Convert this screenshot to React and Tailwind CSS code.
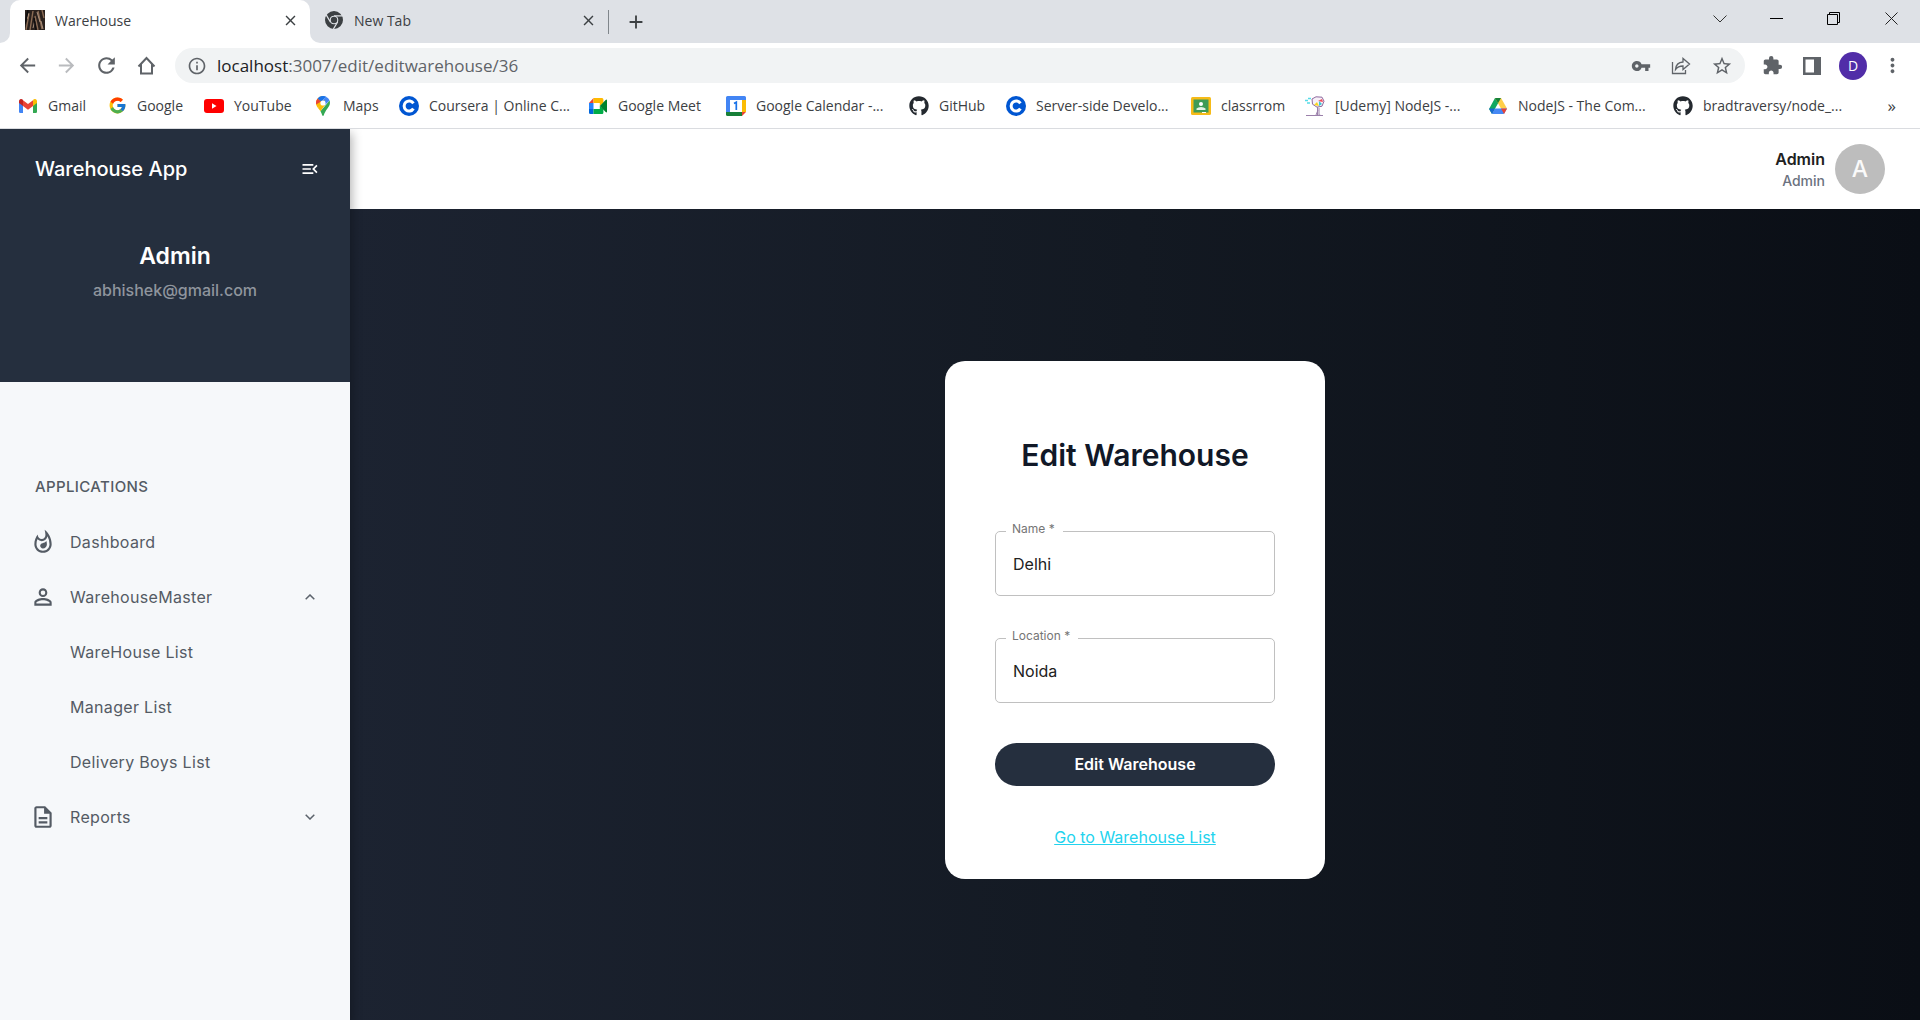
import { FcGoogle } from "react-icons/fc";
import { FaGithub } from "react-icons/fa";
import {
  MdArrowBack, MdArrowForward, MdRefresh, MdInfoOutline, MdVpnKey, MdStarBorder,
  MdExtension, MdMoreVert, MdMenuOpen, MdOutlineWhatshot, MdPersonOutline, MdOutlineDescription, MdClose, MdAdd,
} from "react-icons/md";

const GmailIcon = () => (
  <svg viewBox="0 0 18 14" className="w-[18px] h-[14px]">
    <path d="M0 2v10.700Q0 14 1.300 14H4V6z" fill="#4285f4" />
    <path d="M18 2v10.700Q18 14 16.700 14H14V6z" fill="#34a853" />
    <path d="M14 1.500V7l4-3V2.200C18 .2 15.800-.7 14.400.6z" fill="#fbbc04" />
    <path d="M4 7V1.200l5 3.800 5-3.800V7l-5 3.800z" fill="#ea4335" />
    <path d="M0 2.200V4l4 3V1.200L3.600.6C2.200-.7 0 .2 0 2.200z" fill="#c5221f" />
  </svg>
);
const YoutubeIcon = () => (
  <svg viewBox="0 0 20 14" className="w-5 h-[14px]">
    <rect width="20" height="14" rx="3" fill="#ff0000" />
    <path d="M8 4.300v5.400L12.500 7z" fill="#fff" />
  </svg>
);
const MapsIcon = () => (
  <svg viewBox="0 0 14 20" className="w-[14px] h-5">
    <path d="M7 0a7 7 0 0 0-7 7c0 2 .8 3.400 1.800 4.800L7 7z" fill="#fbbc04" />
    <path d="M1.600 2.500A7 7 0 0 0 0 7l.2 1.500L5 5.500z" fill="#ea4335" />
    <path d="M1.600 2.500 5 5.500 10.500.9A7 7 0 0 0 1.600 2.500z" fill="#1a73e8" />
    <path d="M10.500.9A7 7 0 0 1 13.600 4.600L8 10 5 5.500z" fill="#4285f4" />
    <path d="M1.800 11.800 8.800 4 9 9l-4.500 6.200z" fill="#fbbc04" />
    <path d="M13.600 4.600c1 3-.2 5.400-1.800 7.400C9.500 15 8.500 17 7.800 19.200q-.8 1.400-1.600 0-.6-2.200-1.700-4z" fill="#34a853" />
    <circle cx="7" cy="7" r="2.600" fill="#fff" />
  </svg>
);
const CourseraIcon = () => (
  <svg viewBox="0 0 20 20" className="size-5">
    <circle cx="10" cy="10" r="10" fill="#0056d2" />
    <path d="M14.400 7.400a5 5 0 1 0 0 5.200" fill="none" stroke="#fff" strokeWidth="3" />
  </svg>
);
const MeetIcon = () => (
  <svg viewBox="0 0 20 16" className="w-[18px] h-4" preserveAspectRatio="none">
    <path d="M0 5 5 0v5z" fill="#ea4335" />
    <path d="M0 5h5v6H0z" fill="#2684fc" />
    <path d="M0 11h5v5H1.500Q0 16 0 14.500z" fill="#0066da" />
    <path d="M5 0h9.500Q16 0 16 1.500V5l-4 3V5H5z" fill="#ffba00" />
    <path d="M5 11h7V8l4 3v3.500q0 1.500-1.500 1.500H5z" fill="#00ac47" />
    <path d="m12 8 6.500-6Q20 1 20 2.500v11q0 1.500-1.500.5z" fill="#00832d" />
  </svg>
);
const CalendarIcon = () => (
  <svg viewBox="0 0 20 20" className="size-5">
    <path d="M1.500 0H18.500Q20 0 20 1.500V4H4v12H0V1.500Q0 0 1.500 0z" fill="#4285f4" />
    <path d="M16 4h4v12h-4z" fill="#fbbc04" />
    <path d="M0 16h16v4H1.500Q0 20 0 18.500z" fill="#188038" />
    <path d="M16 16h4l-4 4z" fill="#ea4335" />
    <path d="M4 4h12v12H4z" fill="#fff" />
    <path d="m8 7.500 2.300-1.300V14" fill="none" stroke="#1a73e8" strokeWidth="1.700" />
  </svg>
);
const ClassroomIcon = () => (
  <svg viewBox="0 0 20 18" className="w-5 h-[18px]">
    <rect width="20" height="18" rx="1.500" fill="#f6bb18" />
    <path d="M2.500 2.500h15v13h-15z" fill="#3f9b56" />
    <circle cx="10" cy="7" r="2" fill="#fff" />
    <path d="M5.500 13v-1.500Q7 10 10 10t4.500 1.500V13z" fill="#e3f2e6" />
    <path d="M11 15h4v1h-4z" fill="#fff" />
  </svg>
);
const UdemyIcon = () => (
  <svg viewBox="0 0 20 20" className="size-5" fill="none">
    <path d="M7 3 11 .8l6 .4 2 4-2 5-5 1-4.500-3z" fill="#f7f0f8" stroke="#8e6a9e" />
    <path d="m13 5 4-2 1 3z" fill="#ef4d5a" />
    <path d="m9 9 3-3 2 4z" fill="#f9d423" />
    <path d="m14 5 0 5 3-2z" fill="#39c6d6" />
    <path d="M0 4.500h3M2 7h3M3 2.500h3" stroke="#55dce8" strokeWidth="1.500" />
    <path d="M12.500 11v8.500M14 12v7l2 .5M1 19.500h17M11 19l2-5" stroke="#9b80aa" />
  </svg>
);
const DriveIcon = () => (
  <svg viewBox="0 0 18 16" className="w-[18px] h-4">
    <path d="M6 0h3l3 5-2.900.200L3 16 .3 11.500Q0 11 .3 10.400z" fill="#11a861" />
    <path d="M6 0h5.500q.5 0 .8.500L18 10.600h-6z" fill="#ffcf48" />
    <path d="M6 0h6L9 5.300z" fill="#188038" />
    <path d="M5.900 10.600H18l-2.600 4.700q-.4.700-1.200.7H3z" fill="#4688f4" />
    <path d="M12 10.600h6L15 16z" fill="#ea4335" />
    <path d="M0 10.600h5.900L3 16z" fill="#1967d2" />
  </svg>
);
const ChromeIcon = () => (
  <svg viewBox="0 0 18 18" className="size-[18px]" fill="none">
    <circle cx="9" cy="9" r="6.500" stroke="#3c4043" strokeWidth="5" />
    <circle cx="9" cy="9" r="4.300" fill="#dee1e6" />
    <path d="M9 4.900h8.500M5.400 11 1.200 3.900M12.600 11 8.400 18" stroke="#dee1e6" strokeWidth="1.300" />
    <circle cx="9" cy="9" r="3.200" fill="#3c4043" />
  </svg>
);
const HomeIcon = () => (
  <svg viewBox="0 0 23 23" className="size-[23px]" fill="none" stroke="#5f6368" strokeWidth="2">
    <path d="m3.500 12.500 8-8.500 8 8.500M6 10v9.500h11V10" />
  </svg>
);
const GithubIcon = () => <FaGithub size={20} color="#24292f" />;

const bookmarks = [
  ["Gmail", GmailIcon, "w-[89px]"],
  ["Google", () => <FcGoogle size={19} />, "w-[97px]"],
  ["YouTube", YoutubeIcon, "w-[109px]"],
  ["Maps", MapsIcon, "w-[86px]"],
  ["Coursera | Online C...", CourseraIcon, "w-[189px]"],
  ["Google Meet", MeetIcon, "w-[138px]"],
  ["Google Calendar -...", CalendarIcon, "w-[183px]"],
  ["GitHub", GithubIcon, "w-[97px]"],
  ["Server-side Develo...", CourseraIcon, "w-[185px]"],
  ["classrrom", ClassroomIcon, "w-[114px]"],
  ["[Udemy] NodeJS -...", UdemyIcon, "w-[183px]"],
  ["NodeJS - The Com...", DriveIcon, "w-[185px]"],
  ["bradtraversy/node_...", GithubIcon, "w-[184px]"],
];

const WoodIcon = () => (
  <svg viewBox="0 0 20 20" className="h-5 w-5">
    <path d="M0 0h20v20H0z" fill="#2a211d" />
    <path d="M1 20 4 4M5 20 8 1M13 20 10 6M17 19 13 1M19 8 17 0" stroke="#8a6b54" strokeWidth="1.400" />
    <path d="m2 9 2-6M8 18l2-8M15 12 12 2M18 19l-2-8" stroke="#c3a892" strokeWidth=".8" />
    <path d="M0 14 3 0M11 20 9 8" stroke="#0f0d0e" strokeWidth="1.500" />
  </svg>
);

function TabStrip() {
  return (
    <div className="flex h-[43px] bg-[#dee1e6]">
      <div className="flex w-[10px] bg-white"><div className="w-full rounded-br-[10px] bg-[#dee1e6]" /></div>
      <div className="bg-[#dee1e6]">
        <div className="flex h-full w-[300px] items-center rounded-t-[10px] bg-white pb-[3px] pl-[15px] pr-[11px]">
          <WoodIcon />
          <span className="ml-[10px] flex-1 text-[14px] text-[#3c4043]">WareHouse</span>
          <button aria-label="Close WareHouse"><MdClose size={17} color="#3c4043" /></button>
        </div>
      </div>
      <div className="bg-white">
        <div className="flex h-full w-[298px] items-center rounded-bl-[10px] bg-[#dee1e6] pb-[3px] pl-[15px] pr-[11px]">
          <ChromeIcon />
          <span className="ml-[11px] flex-1 text-[14px] text-[#3c4043]">New Tab</span>
          <button aria-label="Close New Tab"><MdClose size={17} color="#3c4043" /></button>
        </div>
      </div>
      <div className="my-auto h-6 w-px bg-[#80868b]" />
      <button aria-label="New tab" className="ml-4"><MdAdd size={22} color="#3c4043" /></button>
      <div className="ml-auto flex items-start">
        <button aria-label="Search tabs" className="flex h-[37px] w-[57px] items-center justify-center">
          <svg viewBox="0 0 14 8" className="h-2 w-[14px]" fill="none" stroke="#333"><path d="m.5.500 6.500 6.500L13.500.500" /></svg>
        </button>
        <button aria-label="Minimize" className="flex h-[37px] w-[57px] items-center justify-center">
          <span className="h-px w-[13px] bg-black" />
        </button>
        <button aria-label="Restore" className="flex h-[37px] w-[57px] items-center justify-center">
          <svg viewBox="0 0 13 13" className="size-[13px]" fill="none" stroke="#000"><path d="M.5 2.500h10v10H.5zM2.500 2.500v-2h10v10h-2" /></svg>
        </button>
        <button aria-label="Close window" className="flex h-[37px] w-[58px] items-center justify-center">
          <svg viewBox="0 0 13 13" className="size-[13px]" fill="none" stroke="#222"><path d="m.5.500 12 12m0-12-12 12" /></svg>
        </button>
      </div>
    </div>
  );
}

function AddressBar() {
  return (
    <div className="flex h-[45px] items-center bg-white pl-4 text-[#5f6368]">
      <div className="flex w-[159px] gap-4">
        <button aria-label="Back"><MdArrowBack size={23} /></button>
        <button aria-label="Forward"><MdArrowForward size={23} color="#b9bbbe" /></button>
        <button aria-label="Reload"><MdRefresh size={25} /></button>
        <button aria-label="Home"><HomeIcon /></button>
      </div>
      <div className="flex h-[35px] flex-1 items-center rounded-full bg-[#f1f3f4] pl-3 pr-3">
        <MdInfoOutline size={20} />
        <div className="ml-[10px] flex-1 text-[17px]"><span className="text-[#202124]">localhost</span>:3007/edit/editwarehouse/36</div>
        <div className="flex items-center gap-5">
          <button aria-label="Passwords"><MdVpnKey size={20} /></button>
          <button aria-label="Share">
            <svg viewBox="0 0 20 18" className="h-[18px] w-5" fill="none" stroke="#5f6368" strokeWidth="1.300"><path d="M1.500 5v11.500h13V13M4.500 12.500Q5 5.500 12 5V1.500L18.500 7 12 12.500V9q-5 0-7.500 3.500z" /></svg>
          </button>
          <button aria-label="Bookmark"><MdStarBorder size={22} /></button>
        </div>
      </div>
      <div className="flex items-center pl-[17px] pr-4">
        <button aria-label="Extensions"><MdExtension size={21} /></button>
        <button aria-label="Side panel" className="ml-5">
          <svg viewBox="0 0 18 18" className="size-[18px]"><path d="M0 0h18v18H0zM2.500 2.500v13h8.500v-13z" fill="#5f6368" fillRule="evenodd" /></svg>
        </button>
        <button className="ml-[18px] flex size-7 items-center justify-center rounded-full bg-[#512da8] text-[14px] text-white">D</button>
        <button aria-label="Menu" className="ml-[14px]"><MdMoreVert size={23} /></button>
      </div>
    </div>
  );
}

function BookmarkBar() {
  return (
    <nav className="flex h-[41px] items-center border-b border-[#dadce0] bg-white pb-[5px] pl-[18px] text-[14px] text-[#3c4043]">
      {bookmarks.map(([label, Icon, width]) => (
        <a key={label} href="#" className={`flex items-center whitespace-nowrap ${width}`}>
          <span className="mr-[10px] flex w-5 shrink-0 justify-center"><Icon /></span>
          {label}
        </a>
      ))}
      <button aria-label="More bookmarks" className="ml-auto mr-6 text-[17px]">»</button>
    </nav>
  );
}

const Chevron = ({ open }) => (
  <svg viewBox="0 0 10 6" className="ml-auto h-[6px] w-[10px]" fill="none" stroke="#5b626b" strokeWidth="1.500">
    <path d={open ? "M.7 5.300 5 1l4.300 4.300" : "M.7.700 5 5 9.300.700"} />
  </svg>
);

function NavItem({ icon, label, open }) {
  return (
    <a href="#" className="flex h-[55px] items-center pl-[30px] pr-[35px]">
      <span className="flex w-10">{icon}</span>
      {label}
      {open !== undefined && <Chevron open={open} />}
    </a>
  );
}

function Sidebar() {
  return (
    <aside className="z-10 flex w-[350px] shrink-0 flex-col bg-[#f6f8fa] shadow-[2px_4px_10px_rgba(0,0,0,0.3)]">
      <div className="h-[253px] bg-[#252f3e] text-center">
        <div className="flex h-20 items-center justify-between pl-[35px] pr-[30px] text-white">
          <span className="text-[20px] font-medium">Warehouse App</span>
          <button aria-label="Collapse menu"><MdMenuOpen size={20} /></button>
        </div>
        <div className="mt-[31px] text-[23px] leading-8 font-semibold text-white">Admin</div>
        <div className="mt-[6px] text-[16px] leading-6 font-medium text-[#8f959d]">abhishek@gmail.com</div>
      </div>
      <nav className="mt-[93px] text-[16px] tracking-[0.02em] text-[#545b64]">
        <h2 className="mb-[15px] pl-[35px] text-[15px] leading-6 font-medium tracking-wide">APPLICATIONS</h2>
        <NavItem icon={<MdOutlineWhatshot size={26} />} label="Dashboard" />
        <NavItem icon={<MdPersonOutline size={26} />} label="WarehouseMaster" open={true} />
        <NavItem label="WareHouse List" />
        <NavItem label="Manager List" />
        <NavItem label="Delivery Boys List" />
        <NavItem icon={<MdOutlineDescription size={26} />} label="Reports" open={false} />
      </nav>
    </aside>
  );
}

function Field({ id, label, value }) {
  return (
    <div className="relative">
      <input id={id} defaultValue={value} className="h-[65px] w-full rounded-[5px] border border-[#c0c0c0] px-[17px] pt-[2px] text-[16px] text-[#212121] outline-none" />
      <label htmlFor={id} className="absolute -top-[10px] left-[11px] bg-white pl-[6px] pr-2 text-[12px] leading-4 text-[#757575]">{label} *</label>
    </div>
  );
}

export default function App() {
  return (
    <div className="flex min-h-screen flex-col overflow-x-hidden font-['Inter',sans-serif]">
      <header className="relative z-20 font-['Open_Sans',sans-serif]">
        <TabStrip />
        <AddressBar />
        <BookmarkBar />
      </header>
      <div className="flex flex-1">
        <Sidebar />
        <div className="flex flex-1 flex-col">
          <div className="flex h-20 items-center justify-end bg-white pr-[35px]">
            <div className="mr-[10px] text-right">
              <div className="text-[16px] leading-6 font-semibold text-[#212121]">Admin</div>
              <div className="text-[14px] leading-5 font-medium text-[#6b7280]">Admin</div>
            </div>
            <div className="flex size-[50px] items-center justify-center rounded-full bg-[#bdbdbd] text-[23px] font-medium text-[#fafafa]">A</div>
          </div>
          <main className="flex flex-1 items-center justify-center bg-linear-to-r from-[#1c2331] via-[#131922] to-[#0a0e15] pt-[10px]">
            <form className="w-[380px] rounded-[20px] bg-white px-[50px] pt-[73px] pb-[30px] text-center">
              <h1 className="text-[30px] leading-[42px] font-semibold text-[#111827]">Edit Warehouse</h1>
              <div className="mt-[55px] flex flex-col gap-[42px]">
                <Field id="name" label="Name" value="Delhi" />
                <Field id="location" label="Location" value="Noida" />
              </div>
              <button type="button" className="mt-10 h-[43px] w-full rounded-full bg-[#252f3e] text-[16px] font-semibold text-white">Edit Warehouse</button>
              <a href="#" className="mt-[39px] inline-block text-[16px] leading-6 text-[#22d3ee] underline">Go to Warehouse List</a>
            </form>
          </main>
        </div>
      </div>
    </div>
  );
}
